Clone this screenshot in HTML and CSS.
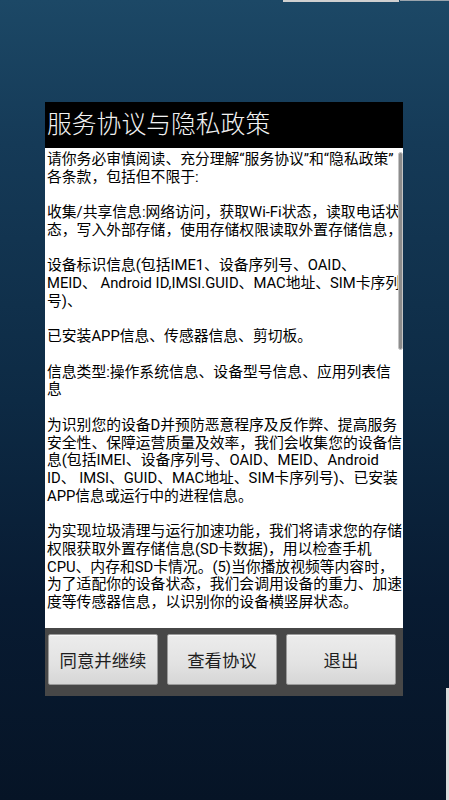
FILE: index.html
```html
<!DOCTYPE html>
<html lang="zh-CN">
<head>
<meta charset="utf-8">
<title>服务协议与隐私政策</title>
<link rel="stylesheet" href="styles.css">
</head>
<body>
<div class="dialog">
  <div class="title">服务协议与隐私政策</div>
  <div class="content">
    <p>请你务必审慎阅读、充分理解“服务协议”和“隐私政策”<br>各条款，包括但不限于:</p>
    <p>收集/共享信息:网络访问，获取Wi-Fi状态，读取电话状<br>态，写入外部存储，使用存储权限读取外置存储信息，</p>
    <p>设备标识信息(包括IME1、设备序列号、OAID、<br>MEID、 Android ID,IMSI.GUID、MAC地址、SIM卡序列<br>号)、</p>
    <p>已安装APP信息、传感器信息、剪切板。</p>
    <p>信息类型:操作系统信息、设备型号信息、应用列表信<br>息</p>
    <p>为识别您的设备D并预防恶意程序及反作弊、提高服务<br>安全性、保障运营质量及效率，我们会收集您的设备信<br>息(包括IMEI、设备序列号、OAID、MEID、Android<br>ID、 IMSI、GUID、MAC地址、SIM卡序列号)、已安装<br>APP信息或运行中的进程信息。</p>
    <p>为实现垃圾清理与运行加速功能，我们将请求您的存储<br>权限获取外置存储信息(SD卡数据)，用以检查手机<br>CPU、内存和SD卡情况。(5)当你播放视频等内容时，<br>为了适配你的设备状态，我们会调用设备的重力、加速<br>度等传感器信息，以识别你的设备横竖屏状态。</p>
    <div class="scrollbar"></div>
  </div>
  <div class="buttons">
    <button class="btn">同意并继续</button>
    <button class="btn">查看协议</button>
    <button class="btn">退出</button>
  </div>
</div>
</body>
</html>
```
FILE: styles.css
```css
html, body {
  margin: 0;
  padding: 0;
}
body {
  width: 449px;
  height: 800px;
  overflow: hidden;
  box-sizing: border-box;
  padding: 102px 0 0 45px;
  font-family: Roboto, "Noto Sans CJK SC", sans-serif;
  background:
    linear-gradient(#dcdcdc, #dcdcdc) 446px 688px / 3px 112px no-repeat,
    linear-gradient(#d0d0d0, #d0d0d0) 283px 0 / 116px 2px no-repeat,
    linear-gradient(#9aa4ad, #9aa4ad) 400px 0 / 49px 1px no-repeat,
    linear-gradient(180deg, #1c4866 0%, #153a57 18%, #0d2a44 50%, #081b32 75%, #061426 100%);
}
.dialog {
  width: 358px;
}
.title {
  height: 46px;
  background: #000;
  color: #f2f2f2;
  font-family: "Noto Sans CJK SC", sans-serif;
  font-weight: 300;
  font-size: 24.8px;
  line-height: 40px;
  padding-left: 2px;
  box-sizing: border-box;
  white-space: nowrap;
}
.content {
  position: relative;
  height: 480px;
  background: #fff;
  box-sizing: border-box;
  padding: 3px 0 0 2px;
  overflow: hidden;
  color: #000;
  font-size: 14.8px;
  line-height: 17.72px;
  white-space: nowrap;
}
.content p {
  margin: 0 0 17.72px 0;
}
.scrollbar {
  position: absolute;
  right: 0;
  top: 4px;
  width: 5px;
  height: 198px;
  border-radius: 3px;
  background: #8c8c8c;
  border: 1px solid #c4c4c4;
  box-sizing: border-box;
}
.buttons {
  height: 68px;
  background: #474747;
  box-sizing: border-box;
  padding: 6px 5px 0 3px;
  display: flex;
  gap: 9px;
}
.btn {
  width: 110px;
  height: 51px;
  margin: 0;
  padding: 0;
  border: 1px solid #9a9a9a;
  border-radius: 2px;
  background: linear-gradient(180deg, #ececec 0%, #e2e2e2 60%, #d6d6d6 100%);
  box-shadow: inset 0 1px 0 #f8f8f8;
  color: #1e1e1e;
  font-family: "Noto Sans CJK SC", sans-serif;
  font-size: 17.4px;
  line-height: 1;
}
```
